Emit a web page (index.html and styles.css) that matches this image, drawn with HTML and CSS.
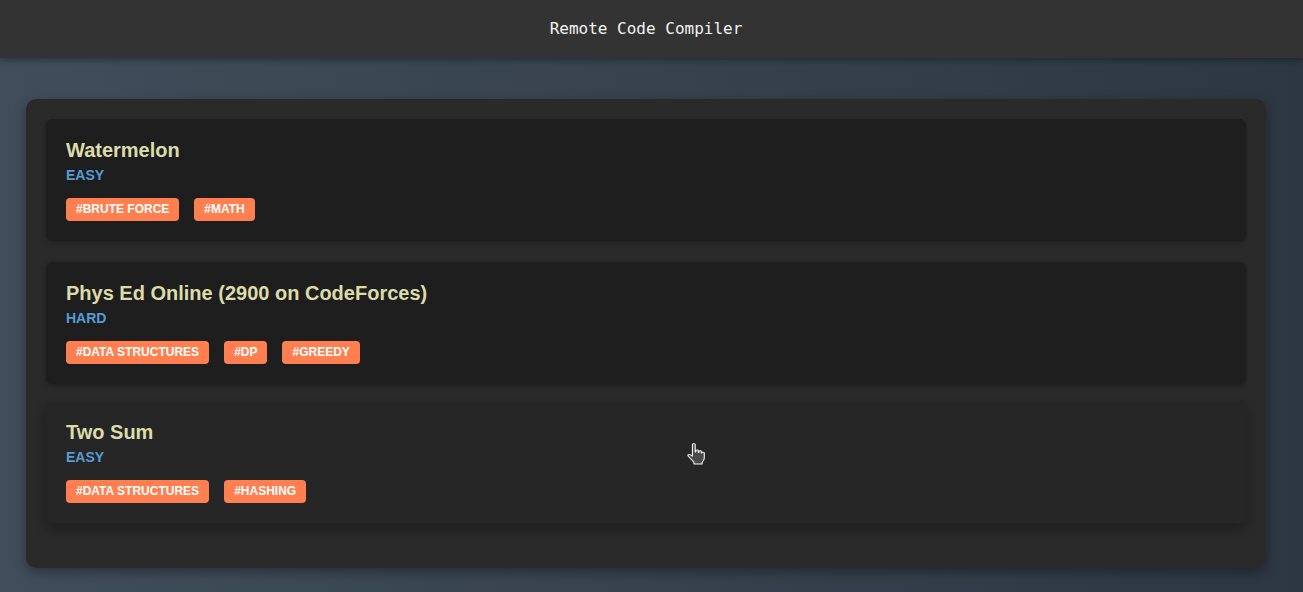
FILE: index.html
```html
<!DOCTYPE html>
<html lang="en">
<head>
<meta charset="utf-8">
<title>Remote Code Compiler</title>
<link rel="stylesheet" href="styles.css">
</head>
<body>
<header class="topbar">
  <h1 class="brand">Remote Code Compiler</h1>
</header>
<main class="panel">
  <div class="card">
    <h3 class="card-title">Watermelon</h3>
    <div class="difficulty">EASY</div>
    <div class="tags">
      <span class="tag">#BRUTE FORCE</span>
      <span class="tag">#MATH</span>
    </div>
  </div>
  <div class="card">
    <h3 class="card-title">Phys Ed Online (2900 on CodeForces)</h3>
    <div class="difficulty">HARD</div>
    <div class="tags">
      <span class="tag">#DATA STRUCTURES</span>
      <span class="tag">#DP</span>
      <span class="tag">#GREEDY</span>
    </div>
  </div>
  <div class="card hovered">
    <h3 class="card-title">Two Sum</h3>
    <div class="difficulty">EASY</div>
    <div class="tags">
      <span class="tag">#DATA STRUCTURES</span>
      <span class="tag">#HASHING</span>
    </div>
    <svg class="cursor" width="20" height="22" viewBox="2.4 1.2 13.2 19" preserveAspectRatio="none">
      <path d="M6 2.5c0-1 1.8-1 1.8 0V9h.4V7.8c0-.9 1.7-.9 1.7 0V9.4h.3V8.6c0-.9 1.7-.9 1.7 0v1.2h.3c0-.9 1.6-.9 1.6 0v4.4c0 1.6-.6 2.8-1.4 3.6v1.5H7v-1.5L3.2 12.4c-.6-.8.4-1.8 1.2-1.2L6 12.6z" fill="#4a4a4a" stroke="#f4f4f4" stroke-width="0.75" stroke-linejoin="round"/>
    </svg>
  </div>
</main>
</body>
</html>
```
FILE: styles.css
```css
html, body {
  margin: 0;
  padding: 0;
}
body {
  min-height: 592px;
  background: linear-gradient(to right, #424d5b, #2d3742);
  font-family: "Liberation Sans", Arial, sans-serif;
}
.topbar {
  height: 58px;
  background: #333333;
  display: flex;
  align-items: center;
  justify-content: center;
  box-shadow: 0 2px 6px rgba(0, 0, 0, 0.35);
  position: relative;
  z-index: 1;
}
.brand {
  margin: 0;
  font-family: "DejaVu Sans Mono", monospace;
  font-weight: normal;
  font-size: 16px;
  color: #f2f2f2;
  padding: 0 11px 2px 0;
}
.panel {
  display: block;
  width: 1200px;
  margin: 41px 0 0 26px;
  padding: 20px 20px 20px;
  background: #2a2a2a;
  border-radius: 10px;
  box-shadow: 0 4px 12px rgba(0, 0, 0, 0.35);
}
.card {
  position: relative;
  background: #1e1e1e;
  border-radius: 6px;
  padding: 20px;
  margin-bottom: 21px;
  box-shadow: 0 2px 5px rgba(0, 0, 0, 0.25);
}
.card.hovered {
  background: #262626;
  transform: translateY(-4px);
  box-shadow: 0 6px 14px rgba(0, 0, 0, 0.3);
}
.card-title {
  margin: 0;
  font-size: 20px;
  line-height: 23px;
  font-weight: bold;
  color: #dcdcaa;
}
.difficulty {
  margin-top: 5px;
  font-size: 14px;
  line-height: 16px;
  font-weight: bold;
  color: #569cd6;
}
.tags {
  display: flex;
  gap: 15px;
  margin-top: 15px;
}
.tag {
  background: #ff7f50;
  color: #ffffff;
  font-size: 12px;
  line-height: 15px;
  font-weight: bold;
  padding: 4px 10px;
  border-radius: 4px;
}
.cursor {
  position: absolute;
  left: 641px;
  top: 42px;
}
```
